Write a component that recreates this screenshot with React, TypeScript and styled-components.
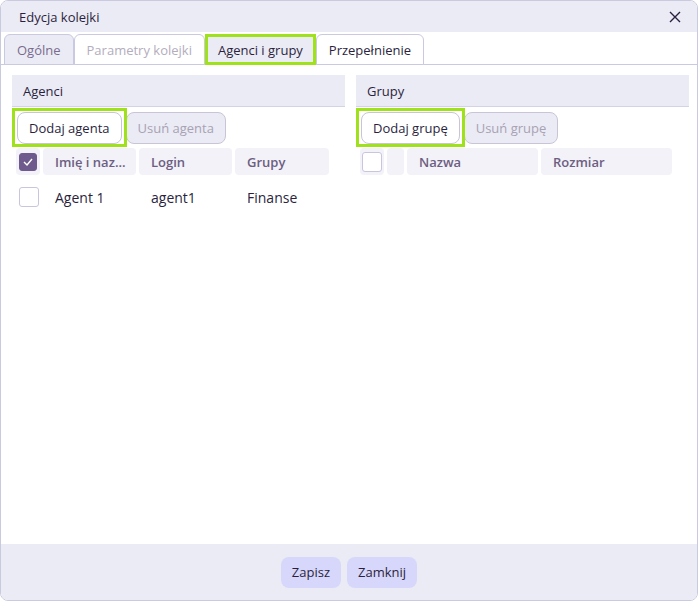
import styled, { createGlobalStyle } from "styled-components";

const GlobalStyle = createGlobalStyle`
  body {
    margin: 0;
    font-family: "Open Sans", "Noto Sans", sans-serif;
    color: #2b1f40;
  }
  * {
    box-sizing: border-box;
  }
`;

const Dialog = styled.div`
  display: flex;
  flex-direction: column;
  width: 698px;
  height: 601px;
  border: 1px solid #c9c9e0;
  border-radius: 8px;
  overflow: hidden;
  background-color: #ffffff;
`;

const TitleBar = styled.div`
  display: flex;
  align-items: center;
  justify-content: space-between;
  height: 31px;
  padding: 0 12px 0 18px;
  background-color: #ebebf5;
  font-size: 13px;
`;

const CloseButton = styled.button`
  display: flex;
  align-items: center;
  justify-content: center;
  width: 20px;
  height: 20px;
  padding: 0;
  border: none;
  background: none;
  color: #2b1f40;
`;

const TabStrip = styled.div`
  display: flex;
  margin-top: 2px;
  padding: 0 3px;
  border-bottom: 1px solid #c9c9e0;
`;

const Tab = styled.div<{ $variant: "idle" | "disabled" | "active" | "normal" }>`
  position: relative;
  display: flex;
  align-items: center;
  height: 31px;
  padding: 0 12px;
  margin-bottom: -1px;
  border: 1px solid #c9c9e0;
  border-radius: 6px 6px 0 0;
  font-size: 13px;
  background-color: ${(p) =>
    p.$variant === "idle" || p.$variant === "active" ? "#ebebf5" : "#ffffff"};
  color: ${(p) =>
    p.$variant === "idle"
      ? "#7a6b8e"
      : p.$variant === "disabled"
      ? "#b3adbd"
      : "#2b1f40"};

  &::after {
    content: "";
    display: ${(p) => (p.$variant === "active" ? "block" : "none")};
    position: absolute;
    inset: -1px;
    border: 3px solid #9fe21c;
  }
`;

const Content = styled.div`
  display: flex;
  flex: 1;
  gap: 11px;
  padding: 10px 8px 0 11px;
`;

const Panel = styled.div`
  display: flex;
  flex-direction: column;
  flex: 1;
`;

const PanelHeader = styled.div`
  display: flex;
  align-items: center;
  height: 32px;
  padding-left: 11px;
  background-color: #ebebf5;
  border-bottom: 1px solid #d3d3e6;
  font-size: 13px;
`;

const ButtonRow = styled.div`
  display: flex;
  gap: 4px;
  padding: 5px 0 0 5px;
`;

const ToolButton = styled.button<{ $focused?: boolean }>`
  position: relative;
  height: 32px;
  padding: 0 11px;
  border: 1px solid #c9c5d6;
  border-radius: 8px;
  font-family: inherit;
  font-size: 13px;
  background-color: ${(p) => (p.$focused ? "#ffffff" : "#ebebf5")};
  color: ${(p) => (p.$focused ? "#2b1f40" : "#a8a2b3")};
  z-index: ${(p) => (p.$focused ? 1 : 0)};

  &::after {
    content: "";
    display: ${(p) => (p.$focused ? "block" : "none")};
    position: absolute;
    inset: -5px -6px -4px -6px;
    border: 3px solid #9fe21c;
  }
`;

const TableHead = styled.div<{ $columns: string }>`
  display: grid;
  grid-template-columns: ${(p) => p.$columns};
  gap: 3px;
  margin: 4px 0 0 4px;
`;

const HeadCell = styled.div`
  display: flex;
  align-items: center;
  height: 27px;
  padding-left: 12px;
  border-radius: 4px;
  background-color: #f2f2f8;
  color: #6d5e82;
  font-size: 13px;
  font-weight: 600;
  white-space: nowrap;
  overflow: hidden;
`;

const CheckCell = styled.div`
  display: flex;
  align-items: center;
  justify-content: center;
  height: 27px;
  border-radius: 4px;
  background-color: #f2f2f8;
`;

const Checkbox = styled.div<{ $checked?: boolean; $size: number }>`
  display: flex;
  align-items: center;
  justify-content: center;
  width: ${(p) => p.$size}px;
  height: ${(p) => p.$size}px;
  border: 1px solid ${(p) => (p.$checked ? "#6e5a8c" : "#c9c5dc")};
  border-radius: 3px;
  background-color: ${(p) => (p.$checked ? "#6e5a8c" : "#ffffff")};
`;

const DataRow = styled.div`
  display: grid;
  grid-template-columns: 27px 96px 96px 1fr;
  align-items: center;
  height: 44px;
  margin-left: 7px;
  font-size: 14px;
`;

const DataCell = styled.div`
  padding-left: 9px;
`;

const Footer = styled.div`
  display: flex;
  align-items: center;
  justify-content: center;
  gap: 6px;
  height: 56px;
  background-color: #ebebf5;
`;

const FooterButton = styled.button`
  height: 31px;
  padding: 0 11px;
  border: none;
  border-radius: 8px;
  background-color: #d7d7fb;
  color: #2b1f40;
  font-family: inherit;
  font-size: 13px;
`;

function CheckMark() {
  return (
    <svg width="10" height="8" viewBox="0 0 10 8" fill="none">
      <path d="M1 4l3 3 5-6" stroke="#ffffff" strokeWidth="1.4" />
    </svg>
  );
}

export default function App() {
  return (
    <>
      <GlobalStyle />
      <Dialog>
        <TitleBar>
          <span>Edycja kolejki</span>
          <CloseButton>
            <svg width="14" height="14" viewBox="0 0 14 14">
              <path
                d="M2 2l10 10M12 2L2 12"
                stroke="#2b1f40"
                strokeWidth="1.4"
              />
            </svg>
          </CloseButton>
        </TitleBar>
        <TabStrip>
          <Tab $variant="idle">Ogólne</Tab>
          <Tab $variant="disabled">Parametry kolejki</Tab>
          <Tab $variant="active">Agenci i grupy</Tab>
          <Tab $variant="normal">Przepełnienie</Tab>
        </TabStrip>
        <Content>
          <Panel>
            <PanelHeader>Agenci</PanelHeader>
            <ButtonRow>
              <ToolButton $focused>Dodaj agenta</ToolButton>
              <ToolButton>Usuń agenta</ToolButton>
            </ButtonRow>
            <TableHead $columns="24px 93px 93px 94px">
              <CheckCell>
                <Checkbox $checked $size={18}>
                  <CheckMark />
                </Checkbox>
              </CheckCell>
              <HeadCell>Imię i naz...</HeadCell>
              <HeadCell>Login</HeadCell>
              <HeadCell>Grupy</HeadCell>
            </TableHead>
            <DataRow>
              <Checkbox $size={20} />
              <DataCell>Agent 1</DataCell>
              <DataCell>agent1</DataCell>
              <DataCell>Finanse</DataCell>
            </DataRow>
          </Panel>
          <Panel>
            <PanelHeader>Grupy</PanelHeader>
            <ButtonRow>
              <ToolButton $focused>Dodaj grupę</ToolButton>
              <ToolButton>Usuń grupę</ToolButton>
            </ButtonRow>
            <TableHead $columns="24px 17px 131px 131px">
              <CheckCell>
                <Checkbox $size={20} />
              </CheckCell>
              <CheckCell />
              <HeadCell>Nazwa</HeadCell>
              <HeadCell>Rozmiar</HeadCell>
            </TableHead>
          </Panel>
        </Content>
        <Footer>
          <FooterButton>Zapisz</FooterButton>
          <FooterButton>Zamknij</FooterButton>
        </Footer>
      </Dialog>
    </>
  );
}
